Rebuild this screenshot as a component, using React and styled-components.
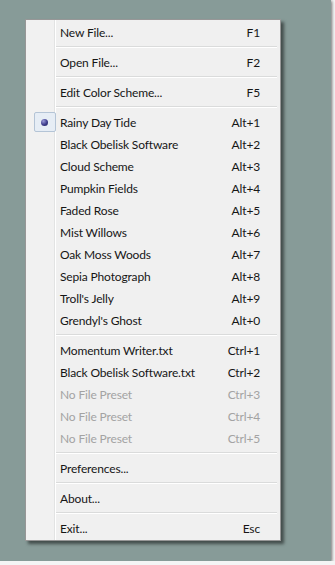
import styled, { createGlobalStyle } from "styled-components";

const Global = createGlobalStyle`
  html, body {
    margin: 0;
    background: #f4f5f5;
  }
`;

const Desktop = styled.div`
  width: 331px;
  height: 561px;
  box-sizing: border-box;
  padding-top: 19px;
  padding-left: 25px;
  background-color: #879b98;
  box-shadow: 1px 1px 3px rgba(0, 0, 0, 0.55);
`;

const Menu = styled.div`
  width: 256px;
  box-sizing: border-box;
  padding: 1px;
  border: 1px solid #979797;
  background: linear-gradient(to right, #f1f1f1 0, #f1f1f1 28px, #e2e3e3 28px, #e2e3e3 29px, #ffffff 29px, #ffffff 30px, #f0f0f0 30px);
  box-shadow: 3px 3px 3px rgba(0, 0, 0, 0.5);
  font-family: Lato, "Noto Sans", sans-serif;
  font-size: 12px;
  letter-spacing: -0.15px;
`;

const Row = styled.div`
  display: flex;
  align-items: center;
  height: 22px;
  color: ${(p) => (p.disabled ? "#a3a3a3" : "#161616")};
`;

const Gutter = styled.div`
  width: 33px;
  height: 22px;
  display: flex;
  align-items: center;
  justify-content: center;
  box-sizing: border-box;
  padding-left: 2px;
`;

const CheckBox = styled.div`
  width: 22px;
  height: 20px;
  box-sizing: border-box;
  border: 1px solid #b4c4d6;
  border-radius: 2px;
  background: #e6edf5;
  display: flex;
  align-items: center;
  justify-content: center;
`;

const Dot = styled.div`
  width: 7px;
  height: 7px;
  border-radius: 50%;
  background: radial-gradient(circle at 35% 30%, #9a9ad8 0, #3c3c8c 55%, #22225a 100%);
`;

const Label = styled.span`
  flex: 1;
`;

const Shortcut = styled.span`
  padding-right: 19px;
`;

const Separator = styled.div`
  height: 8px;
  display: flex;
  align-items: center;
  padding-left: 29px;
  padding-right: 2px;

  &::after {
    content: "";
    flex: 1;
    height: 1px;
    background: #dadbdb;
    border-bottom: 1px solid #ffffff;
  }
`;

const groups = [
  [["New File...", "F1"]],
  [["Open File...", "F2"]],
  [["Edit Color Scheme...", "F5"]],
  [
    ["Rainy Day Tide", "Alt+1", "checked"],
    ["Black Obelisk Software", "Alt+2"],
    ["Cloud Scheme", "Alt+3"],
    ["Pumpkin Fields", "Alt+4"],
    ["Faded Rose", "Alt+5"],
    ["Mist Willows", "Alt+6"],
    ["Oak Moss Woods", "Alt+7"],
    ["Sepia Photograph", "Alt+8"],
    ["Troll's Jelly", "Alt+9"],
    ["Grendyl's Ghost", "Alt+0"],
  ],
  [
    ["Momentum Writer.txt", "Ctrl+1"],
    ["Black Obelisk Software.txt", "Ctrl+2"],
    ["No File Preset", "Ctrl+3", "disabled"],
    ["No File Preset", "Ctrl+4", "disabled"],
    ["No File Preset", "Ctrl+5", "disabled"],
  ],
  [["Preferences...", ""]],
  [["About...", ""]],
  [["Exit...", "Esc"]],
];

function MenuItem({ label, shortcut, state }) {
  return (
    <Row disabled={state === "disabled"}>
      <Gutter>
        {state === "checked" && (
          <CheckBox>
            <Dot />
          </CheckBox>
        )}
      </Gutter>
      <Label>{label}</Label>
      <Shortcut>{shortcut}</Shortcut>
    </Row>
  );
}

export default function App() {
  return (
    <>
      <Global />
      <Desktop>
        <Menu>
          {groups.map((group, gi) => (
            <div key={gi}>
              {gi > 0 && <Separator />}
              {group.map(([label, shortcut, state], i) => (
                <MenuItem key={i} label={label} shortcut={shortcut} state={state} />
              ))}
            </div>
          ))}
        </Menu>
      </Desktop>
    </>
  );
}
